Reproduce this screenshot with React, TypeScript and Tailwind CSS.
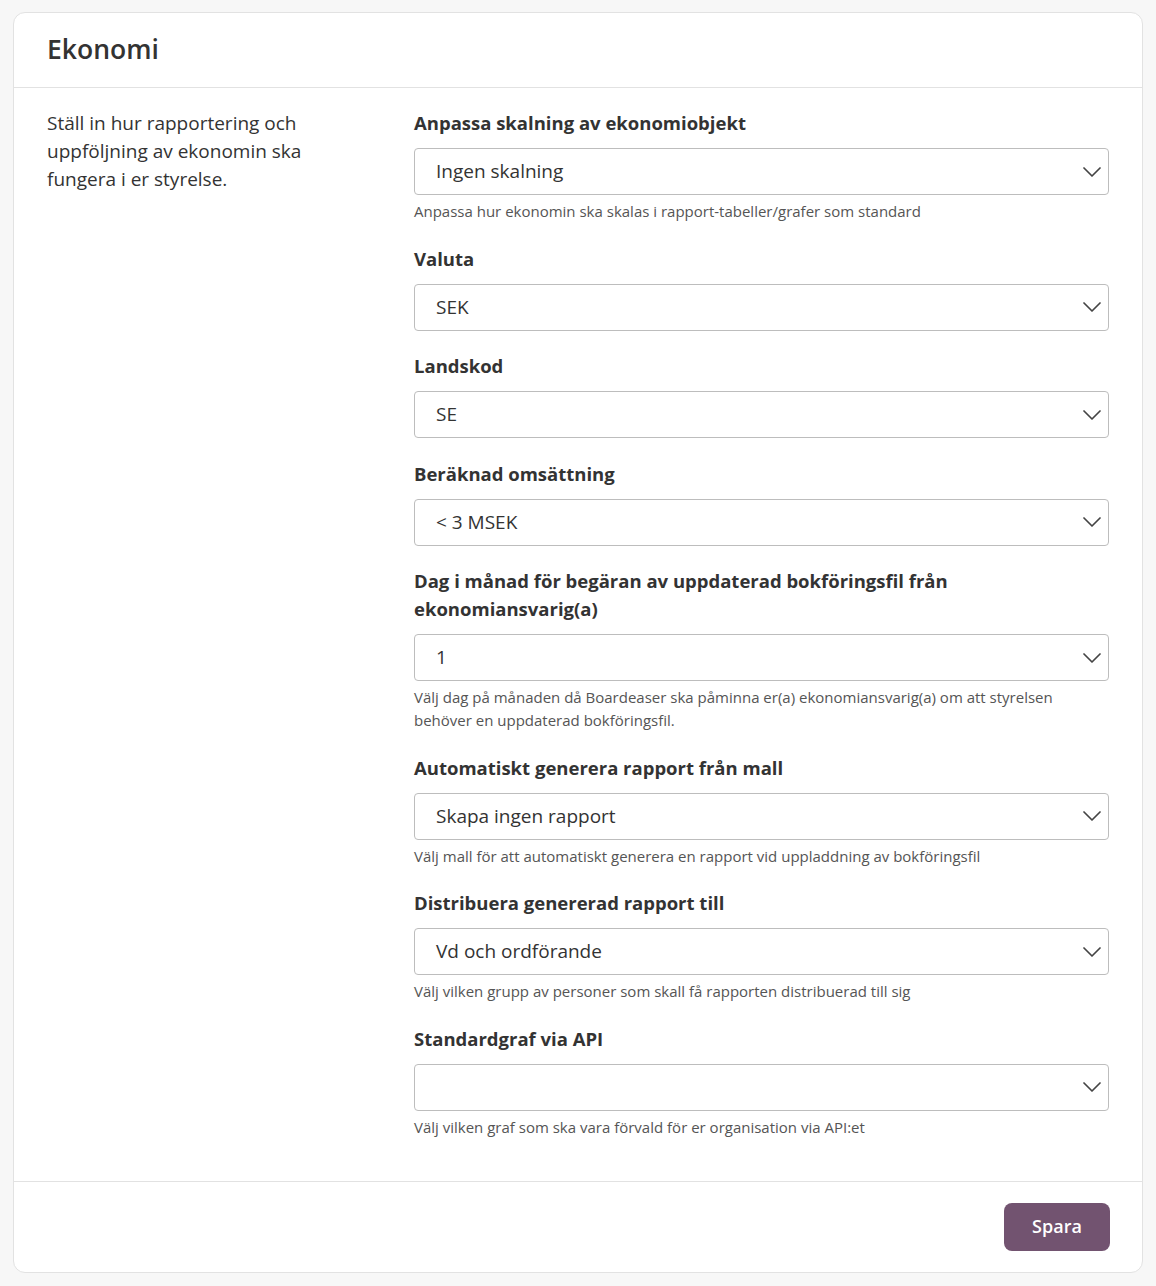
interface Field {
  label: string;
  value: string;
  help?: string;
}

const fields: Field[] = [
  {
    label: 'Anpassa skalning av ekonomiobjekt',
    value: 'Ingen skalning',
    help: 'Anpassa hur ekonomin ska skalas i rapport-tabeller/grafer som standard',
  },
  { label: 'Valuta', value: 'SEK' },
  { label: 'Landskod', value: 'SE' },
  { label: 'Beräknad omsättning', value: '< 3 MSEK' },
  {
    label: 'Dag i månad för begäran av uppdaterad bokföringsfil från ekonomiansvarig(a)',
    value: '1',
    help: 'Välj dag på månaden då Boardeaser ska påminna er(a) ekonomiansvarig(a) om att styrelsen behöver en uppdaterad bokföringsfil.',
  },
  {
    label: 'Automatiskt generera rapport från mall',
    value: 'Skapa ingen rapport',
    help: 'Välj mall för att automatiskt generera en rapport vid uppladdning av bokföringsfil',
  },
  {
    label: 'Distribuera genererad rapport till',
    value: 'Vd och ordförande',
    help: 'Välj vilken grupp av personer som skall få rapporten distribuerad till sig',
  },
  {
    label: 'Standardgraf via API',
    value: '',
    help: 'Välj vilken graf som ska vara förvald för er organisation via API:et',
  },
];

function Chevron() {
  return (
    <svg width="18" height="10" viewBox="0 0 18 10" fill="none" className="shrink-0">
      <polyline points="1,1 9,9 17,1" stroke="#444" strokeWidth="1.7" strokeLinecap="round" strokeLinejoin="round" />
    </svg>
  );
}

export default function App() {
  return (
    <div
      className="min-h-[1286px] bg-[#f7f7f7] px-[13px] pt-3 pb-[14px] text-[#333]"
      style={{ fontFamily: '"Open Sans", "Noto Sans", sans-serif' }}
    >
      <div className="bg-white border border-[#e2e2e2] rounded-xl">
        {/* Header */}
        <div className="h-[75px] flex items-center px-[33px] border-b border-[#e2e2e2]">
          <h1 className="text-[26.5px] font-semibold text-[#333]">Ekonomi</h1>
        </div>

        {/* Body */}
        <div className="flex px-[33px] pt-[21px] pb-[42px]">
          <div className="w-[367px] shrink-0">
            <p className="w-[300px] text-[19px] leading-[28px]">
              Ställ in hur rapportering och uppföljning av ekonomin ska fungera i er styrelse.
            </p>
          </div>
          <div className="flex-1 flex flex-col gap-[21.5px]">
            {fields.map((f) => (
              <div key={f.label}>
                <label className="block text-[18.5px] leading-[28px] font-bold mb-[11px] pr-32">
                  {f.label}
                </label>
                <div className="h-[47px] border border-[#bdbdbd] rounded flex items-center pl-[21px] pr-[7px]">
                  <span className="flex-1 text-[19px]">{f.value}</span>
                  <Chevron />
                </div>
                {f.help && (
                  <p className="mt-[5px] text-[15px] leading-[23px] text-[#555]">{f.help}</p>
                )}
              </div>
            ))}
          </div>
        </div>

        {/* Footer */}
        <div className="border-t border-[#e2e2e2] flex justify-end px-[32px] pt-[21px] pb-[21px]">
          <button className="h-[48px] w-[106px] rounded-lg bg-[#725370] text-white text-[18px] font-semibold">
            Spara
          </button>
        </div>
      </div>
    </div>
  );
}
